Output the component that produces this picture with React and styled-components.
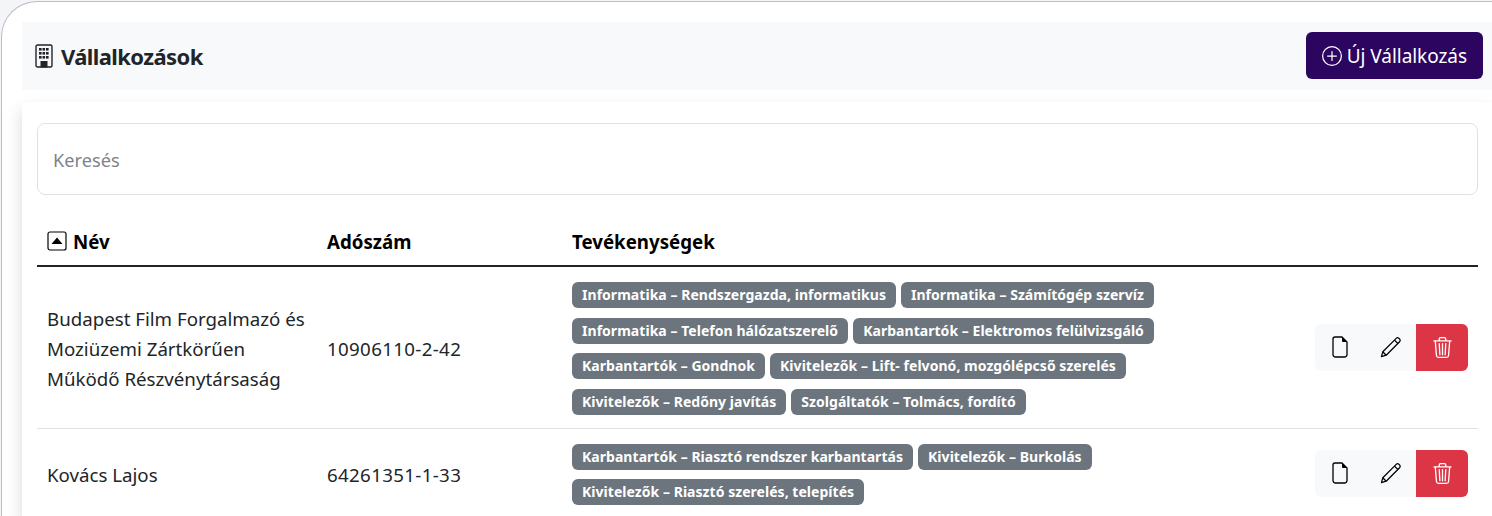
import React from "react";
import styled, { createGlobalStyle } from "styled-components";
import { BsPlusCircle, BsTrash3 } from "react-icons/bs";

const GlobalStyle = createGlobalStyle`
    * { box-sizing: border-box; }
    html, body {
        margin: 0;
        height: 100%;
        overflow: hidden;
        background: #f4f5f7;
    }
    body {
        font-family: "Noto Sans", "Open Sans", sans-serif;
        font-size: 18.7px;
        color: #212529;
    }
`;

const Shell = styled.main`
    margin: 1px 0 0 1px;
    width: 1491px;
    height: 515px;
    overflow: hidden;
    padding: 20px 0 0 20px;
    background: #fff;
    border: 1px solid #b9bdc5;
    border-width: 1px 0 0 1px;
    border-top-left-radius: 36px;
`;

const Toolbar = styled.header`
    height: 68px;
    display: flex;
    align-items: center;
    justify-content: space-between;
    padding: 0 9px 1px 13px;
    background: #f8f9fa;
`;

const Title = styled.h1`
    margin: 0;
    display: flex;
    align-items: center;
    gap: 8px;
    font-size: 22px;
    font-weight: 700;
    letter-spacing: -0.6px;
`;

const PrimaryButton = styled.button`
    height: 47px;
    padding: 0 16px;
    display: flex;
    align-items: center;
    gap: 5px;
    border: 0;
    border-radius: 6px;
    background: #2c0560;
    color: #fff;
    font: inherit;
    font-size: 19px;
    letter-spacing: -0.05px;
    svg { font-size: 20px; }
`;

const Card = styled.section`
    margin-top: 12px;
    padding: 21px 15px 0;
    background: #fff;
    box-shadow: 0 8px 16px rgba(0, 0, 0, 0.15);
    width: 1471px;
`;

const SearchInput = styled.input`
    display: block;
    width: 100%;
    height: 72px;
    padding: 1px 15px 0;
    border: 1px solid #dee2e6;
    border-radius: 8px;
    font: inherit;
    font-size: 18.2px;
    color: #212529;
    &::placeholder { color: #7d8388; }
`;

const Table = styled.table`
    width: 100%;
    margin-top: 22px;
    border-collapse: collapse;
    table-layout: fixed;
`;

const Head = styled.th`
    height: 49px;
    padding: 0 10px;
    text-align: left;
    font-weight: 700;
    border-bottom: 2px solid #212529;
    color: #000;
`;

const SortLabel = styled.span`
    display: flex;
    align-items: center;
    gap: 6px;
`;

const Cell = styled.td`
    padding: 17px 10px 13px;
    line-height: 30px;
    vertical-align: middle;
    border-bottom: 1px solid #dee2e6;
`;

const TaxCell = styled(Cell)`
    letter-spacing: 0.35px;
`;

const BadgeCell = styled(Cell)`
    padding: 15px 10px 13px;
`;

const ActionCell = styled(Cell)`
    padding: 14px 10px;
`;

const BadgeList = styled.div`
    display: flex;
    flex-wrap: wrap;
    gap: 9.5px 5px;
`;

const Badge = styled.span`
    height: 26px;
    padding: 0 10px;
    display: flex;
    align-items: center;
    border-radius: 6px;
    background: #6c757d;
    color: #fff;
    font-size: 14px;
    font-weight: 700;
    letter-spacing: 0.04px;
    line-height: 1;
    white-space: nowrap;
`;

const Actions = styled.div`
    display: flex;
    justify-content: flex-end;
`;

const ActionButton = styled.button`
    width: ${props => props.danger ? "52px" : "50.5px"};
    height: 47px;
    display: flex;
    align-items: center;
    justify-content: center;
    padding: 0;
    border: 0;
    background: ${props => props.danger ? "#dc3545" : "#f8f9fa"};
    color: ${props => props.danger ? "#fff" : "#000"};
    font-size: 21px;
    &:first-child { border-radius: 6px 0 0 6px; }
    &:last-child { border-radius: 0 6px 6px 0; }
`;

const BuildingIcon = () => (
    <svg width="18" height="24" viewBox="0 0 18 24">
        <rect x="1" y="1" width="16" height="22" rx="1.5" fill="none" stroke="#212529" strokeWidth="1.4" />
        {[4, 8, 12].map(y => [4, 7.5, 11].map(x => (
            <rect key={`${x}-${y}`} x={x} y={y} width="2.6" height="2.6" fill="#212529" />
        )))}
        <rect x="5.5" y="17" width="7" height="6.5" fill="#212529" />
    </svg>
);

const FileIcon = () => (
    <svg width="16" height="22" viewBox="0 0 16 22">
        <path d="M3 1 H10 L15 6 V18.5 a2.5 2.5 0 0 1 -2.5 2.5 H3.5 a2.5 2.5 0 0 1 -2.5 -2.5 V3 a2 2 0 0 1 2 -2 Z" fill="none" stroke="#000" strokeWidth="1.3" strokeLinejoin="round" />
        <path d="M10 1 L15 6 H11 a1 1 0 0 1 -1 -1 Z" fill="#000" />
    </svg>
);

const PencilIcon = () => (
    <svg width="22" height="22" viewBox="0 0 22 22" fill="none" stroke="#000" strokeWidth="1.25" strokeLinejoin="round">
        <path d="M2.8 15.8 L16.2 2.4 a2 2 0 0 1 2.8 0 l.6 .6 a2 2 0 0 1 0 2.8 L6.2 19.2 L1.4 20.6 Z" />
        <path d="M14.5 4.1 L17.9 7.5" />
        <path d="M2.8 15.8 L6.2 19.2" />
    </svg>
);

const SortIcon = () => (
    <svg width="20" height="20" viewBox="0 0 20 20">
        <rect x="1" y="1" width="18" height="18" rx="2" fill="none" stroke="#000" strokeWidth="1.2" />
        <path d="M10 6.5 L15.5 13 H4.5 Z" fill="#000" />
    </svg>
);

const companies = [
    {
        name: "Budapest Film Forgalmazó és Moziüzemi Zártkörűen Működő Részvénytársaság",
        tax: "10906110-2-42",
        tags: [
            "Informatika – Rendszergazda, informatikus",
            "Informatika – Számítógép szervíz",
            "Informatika – Telefon hálózatszerelő",
            "Karbantartók – Elektromos felülvizsgáló",
            "Karbantartók – Gondnok",
            "Kivitelezők – Lift- felvonó, mozgólépcső szerelés",
            "Kivitelezők – Redőny javítás",
            "Szolgáltatók – Tolmács, fordító",
        ],
    },
    {
        name: "Kovács Lajos",
        tax: "64261351-1-33",
        tags: [
            "Karbantartók – Riasztó rendszer karbantartás",
            "Kivitelezők – Burkolás",
            "Kivitelezők – Riasztó szerelés, telepítés",
        ],
    },
];

export default function App() {
    return (
        <>
            <GlobalStyle />
            <Shell>
                <Toolbar>
                    <Title><BuildingIcon /> Vállalkozások</Title>
                    <PrimaryButton><BsPlusCircle /> Új Vállalkozás</PrimaryButton>
                </Toolbar>
                <Card>
                    <SearchInput placeholder="Keresés" />
                    <Table>
                        <colgroup>
                            <col style={{ width: 280 }} />
                            <col style={{ width: 245 }} />
                            <col />
                            <col style={{ width: 173 }} />
                        </colgroup>
                        <thead>
                            <tr>
                                <Head><SortLabel><SortIcon /> Név</SortLabel></Head>
                                <Head>Adószám</Head>
                                <Head>Tevékenységek</Head>
                                <Head />
                            </tr>
                        </thead>
                        <tbody>
                            {companies.map(company => (
                                <tr key={company.tax}>
                                    <Cell>{company.name}</Cell>
                                    <TaxCell>{company.tax}</TaxCell>
                                    <BadgeCell>
                                        <BadgeList>
                                            {company.tags.map(tag => <Badge key={tag}>{tag}</Badge>)}
                                        </BadgeList>
                                    </BadgeCell>
                                    <ActionCell>
                                        <Actions>
                                            <ActionButton><FileIcon /></ActionButton>
                                            <ActionButton><PencilIcon /></ActionButton>
                                            <ActionButton danger><BsTrash3 /></ActionButton>
                                        </Actions>
                                    </ActionCell>
                                </tr>
                            ))}
                        </tbody>
                    </Table>
                </Card>
            </Shell>
        </>
    );
}
